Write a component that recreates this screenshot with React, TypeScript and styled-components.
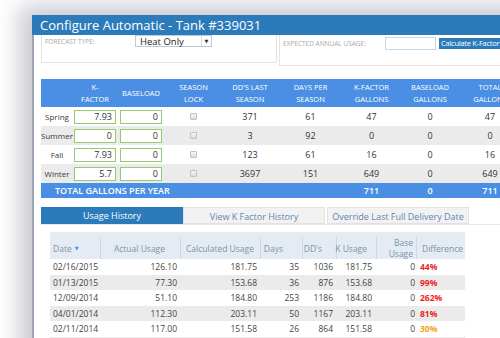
import React from "react";
import styled, { createGlobalStyle } from "styled-components";

const GlobalStyle = createGlobalStyle`
  html, body {
    margin: 0;
    padding: 0;
    background: #ffffff;
    overflow: hidden;
    font-family: "Open Sans", "DejaVu Sans", sans-serif;
  }
`;

type Season = {
  name: string;
  kFactor: string;
  baseload: string;
  dd: number;
  days: number;
  kGal: number;
  bGal: number;
  total: number;
};

const seasons: Season[] = [
  { name: "Spring", kFactor: "7.93", baseload: "0", dd: 371, days: 61, kGal: 47, bGal: 0, total: 47 },
  { name: "Summer", kFactor: "0", baseload: "0", dd: 3, days: 92, kGal: 0, bGal: 0, total: 0 },
  { name: "Fall", kFactor: "7.93", baseload: "0", dd: 123, days: 61, kGal: 16, bGal: 0, total: 16 },
  { name: "Winter", kFactor: "5.7", baseload: "0", dd: 3697, days: 151, kGal: 649, bGal: 0, total: 649 },
];

type Usage = {
  date: string;
  actual: string;
  calc: string;
  days: number;
  dd: number;
  k: string;
  base: number;
  diff: string;
  level: "high" | "mid";
};

const history: Usage[] = [
  { date: "02/16/2015", actual: "126.10", calc: "181.75", days: 35, dd: 1036, k: "181.75", base: 0, diff: "44%", level: "high" },
  { date: "01/13/2015", actual: "77.30", calc: "153.68", days: 36, dd: 876, k: "153.68", base: 0, diff: "99%", level: "high" },
  { date: "12/09/2014", actual: "51.10", calc: "184.80", days: 253, dd: 1186, k: "184.80", base: 0, diff: "262%", level: "high" },
  { date: "04/01/2014", actual: "112.30", calc: "203.11", days: 50, dd: 1167, k: "203.11", base: 0, diff: "81%", level: "high" },
  { date: "02/11/2014", actual: "117.00", calc: "151.58", days: 26, dd: 864, k: "151.58", base: 0, diff: "30%", level: "mid" },
  { date: "01/06/2014", actual: "98.40", calc: "140.22", days: 31, dd: 802, k: "140.22", base: 0, diff: "42%", level: "high" },
];

export default function App() {
  return (
    <>
      <GlobalStyle />
      <Page>
        <Dialog>
          <TitleBar>Configure Automatic - Tank #339031</TitleBar>
          <Content>
            <TopRow>
              <Panel $width={236} $height={28}>
                <FieldRow>
                  <FieldLabel $width={90}>Forecast Type:</FieldLabel>
                  <Select>
                    <span>Heat Only</span>
                    <SelectArrow>▼</SelectArrow>
                  </Select>
                </FieldRow>
              </Panel>
              <Panel $height={31} $grow>
                <FieldRow $top={2}>
                  <FieldLabel $width={102}>Expected Annual Usage:</FieldLabel>
                  <TextBox />
                  <CalcButton>Calculate K-Factors</CalcButton>
                </FieldRow>
              </Panel>
            </TopRow>

            <SeasonTable>
              <SeasonHead>
                <HeadCell />
                <HeadCell>K-<br />FACTOR</HeadCell>
                <HeadCell>BASELOAD</HeadCell>
                <HeadCell>SEASON<br />LOCK</HeadCell>
                <HeadCell>DD'S LAST<br />SEASON</HeadCell>
                <HeadCell>DAYS PER<br />SEASON</HeadCell>
                <HeadCell>K-FACTOR<br />GALLONS</HeadCell>
                <HeadCell>BASELOAD<br />GALLONS</HeadCell>
                <HeadCell>TOTAL<br />GALLONS</HeadCell>
              </SeasonHead>
              {seasons.map((s, i) => (
                <SeasonRow key={s.name} $alt={i % 2 === 1}>
                  <SeasonName>{s.name}</SeasonName>
                  <Cell><NumInput>{s.kFactor}</NumInput></Cell>
                  <Cell><NumInput>{s.baseload}</NumInput></Cell>
                  <Cell><Check /></Cell>
                  <Cell>{s.dd}</Cell>
                  <Cell>{s.days}</Cell>
                  <Cell>{s.kGal}</Cell>
                  <Cell>{s.bGal}</Cell>
                  <Cell>{s.total}</Cell>
                </SeasonRow>
              ))}
              <TotalRow>
                <TotalLabel>Total Gallons Per Year</TotalLabel>
                <TotalCell>711</TotalCell>
                <TotalCell>0</TotalCell>
                <TotalCell>711</TotalCell>
              </TotalRow>
            </SeasonTable>

            <Tabs>
              <Tab $active>Usage History</Tab>
              <Tab>View K Factor History</Tab>
              <Tab $gap>Override Last Full Delivery Date</Tab>
            </Tabs>

            <Grid>
              <GridHead>
                <GH $align="left" $pad={3}>Date <SortArrow>▼</SortArrow></GH>
                <GH $sep $pad={15}>Actual Usage</GH>
                <GH $sep $align="left" $pad={5}>Calculated Usage</GH>
                <GH $sep $pad={19}>Days</GH>
                <GH $sep $pad={14}>DD's</GH>
                <GH $sep $pad={9}>K Usage</GH>
                <GH $sep $pad={3}>Base<br />Usage</GH>
                <GH $sep $align="left" $pad={5}>Difference</GH>
              </GridHead>
              {history.map((h, i) => (
                <GridRow key={h.date} $alt={i % 2 === 1}>
                  <GC $align="left" $pad={3}>{h.date}</GC>
                  <GC $pad={3}>{h.actual}</GC>
                  <GC $pad={3}>{h.calc}</GC>
                  <GC $pad={3}>{h.days}</GC>
                  <GC $pad={3}>{h.dd}</GC>
                  <GC $pad={4}>{h.k}</GC>
                  <GC $pad={1}>{h.base}</GC>
                  <Diff $level={h.level}>{h.diff}</Diff>
                </GridRow>
              ))}
            </Grid>
          </Content>
        </Dialog>
      </Page>
    </>
  );
}

const Page = styled.div`
  padding: 15px 0 0 32px;
  height: 338px;
  box-sizing: border-box;
`;

const Dialog = styled.div`
  width: 520px;
  height: 400px;
  background: #ffffff;
  border-left: 2px solid #9ea6b6;
  box-shadow: -8px -5px 22px 4px rgba(70, 70, 100, 0.3);
`;

const TitleBar = styled.div`
  height: 20px;
  margin-left: -2px;
  padding-left: 8px;
  background: #2b7bbb;
  color: #ffffff;
  font-size: 13px;
  line-height: 20px;
  white-space: nowrap;
`;

const Content = styled.div`
  padding-left: 7px;
`;

const TopRow = styled.div`
  display: flex;
  gap: 2px;
  align-items: flex-start;
`;

const Panel = styled.div<{ $width?: number; $height: number; $grow?: boolean }>`
  box-sizing: border-box;
  width: ${(p) => (p.$width ? `${p.$width}px` : "auto")};
  flex: ${(p) => (p.$grow ? 1 : "none")};
  height: ${(p) => p.$height}px;
  border: 1px solid #e4e4e4;
  border-top: none;
  padding-left: 3px;
`;

const FieldRow = styled.div<{ $top?: number }>`
  display: flex;
  align-items: center;
  margin-top: ${(p) => p.$top ?? 0}px;
  height: 12px;
`;

const FieldLabel = styled.div<{ $width: number }>`
  width: ${(p) => p.$width}px;
  font-size: 6.5px;
  color: #a8a8a8;
  text-transform: uppercase;
  white-space: nowrap;
`;

const Select = styled.div`
  box-sizing: border-box;
  width: 77px;
  height: 12px;
  border: 1px solid #bccadb;
  display: flex;
  align-items: center;
  justify-content: space-between;
  padding-left: 4px;
  font-size: 9.5px;
  color: #222;
  background: #fff;
`;

const SelectArrow = styled.span`
  width: 9px;
  height: 100%;
  border-left: 1px solid #d4dbe4;
  font-size: 5px;
  display: flex;
  align-items: center;
  justify-content: center;
  color: #333;
`;

const TextBox = styled.div`
  box-sizing: border-box;
  width: 51px;
  height: 13px;
  border: 1px solid #c4d6ea;
  background: #fff;
`;

const CalcButton = styled.div`
  margin-left: 3px;
  height: 11px;
  padding: 0 2px;
  background: #2b7bbb;
  color: #fff;
  font-size: 7.5px;
  letter-spacing: -0.25px;
  line-height: 11px;
  white-space: nowrap;
`;

const cols = "32px 44px 48px 57px 56px 65px 57px 60px 60px";

const SeasonTable = styled.div`
  margin-top: 13px;
  width: 479px;
`;

const SeasonHead = styled.div`
  display: grid;
  grid-template-columns: ${cols};
  height: 28px;
  background: #4a8fe3;
`;

const HeadCell = styled.div`
  display: flex;
  align-items: center;
  justify-content: center;
  text-align: center;
  color: #ffffff;
  font-size: 7.5px;
  line-height: 12px;
`;

const SeasonRow = styled.div<{ $alt?: boolean }>`
  display: grid;
  grid-template-columns: ${cols};
  height: 19px;
  background: ${(p) => (p.$alt ? "#ebebeb" : "#ffffff")};
`;

const Cell = styled.div`
  display: flex;
  align-items: center;
  justify-content: center;
  font-size: 9px;
  color: #333;
`;

const SeasonName = styled(Cell)`
  font-size: 8px;
  color: #3a3a3a;
`;

const NumInput = styled.div`
  box-sizing: border-box;
  width: 42px;
  height: 14px;
  border: 1px solid #95cc6f;
  background: #ffffff;
  text-align: right;
  padding-right: 3px;
  font-size: 9px;
  line-height: 12px;
  color: #333;
`;

const Check = styled.span`
  box-sizing: border-box;
  width: 7px;
  height: 7px;
  border: 1px solid #c2c2c2;
  border-radius: 1px;
  background: linear-gradient(#f6f6f6, #dcdcdc);
`;

const TotalRow = styled.div`
  display: grid;
  grid-template-columns: 302px 57px 60px 60px;
  height: 15px;
  background: #4a8fe3;
  color: #fff;
`;

const TotalLabel = styled.div`
  padding-left: 14px;
  font-size: 9px;
  font-weight: 600;
  text-transform: uppercase;
  line-height: 15px;
  white-space: nowrap;
`;

const TotalCell = styled.div`
  text-align: center;
  font-size: 9px;
  font-weight: 600;
  line-height: 15px;
`;

const Tabs = styled.div`
  display: flex;
  margin-top: 9px;
  height: 17px;
  border-bottom: 1px solid #e8e8e8;
`;

const Tab = styled.div<{ $active?: boolean; $gap?: boolean }>`
  box-sizing: border-box;
  width: 142px;
  margin-left: ${(p) => (p.$gap ? 2 : 0)}px;
  background: ${(p) => (p.$active ? "#2b7bbb" : "#f2f2f2")};
  border: ${(p) => (p.$active ? "none" : "1px solid #e2e2e2")};
  color: ${(p) => (p.$active ? "#ffffff" : "#5a86b4")};
  font-size: 9px;
  line-height: 17px;
  text-align: center;
  white-space: nowrap;
`;

const gridCols = "50px 80px 80px 42px 34px 40px 40px 49px";

const Grid = styled.div`
  margin: 7px 0 0 9px;
  width: 415px;
`;

const GridHead = styled.div`
  display: grid;
  grid-template-columns: ${gridCols};
  height: 27px;
  background: #e5ebf2;
`;

const GH = styled.div<{ $align?: "left" | "right"; $pad: number; $sep?: boolean }>`
  display: flex;
  align-items: center;
  justify-content: ${(p) => (p.$align === "left" ? "flex-start" : "flex-end")};
  text-align: ${(p) => p.$align ?? "right"};
  ${(p) => (p.$align === "left" ? "padding-left" : "padding-right")}: ${(p) => p.$pad}px;
  margin: 5px 0;
  border-left: ${(p) => (p.$sep ? "1px solid #cfd8e3" : "none")};
  font-size: 8.5px;
  line-height: 11px;
  color: #7d93aa;
  white-space: nowrap;
`;

const SortArrow = styled.span`
  font-size: 5px;
  margin-left: 3px;
  color: #4a8fe3;
`;

const GridRow = styled.div<{ $alt?: boolean }>`
  display: grid;
  grid-template-columns: ${gridCols};
  height: 15.5px;
  background: ${(p) => (p.$alt ? "#ebebeb" : "#ffffff")};
`;

const GC = styled.div<{ $align?: "left" | "right"; $pad: number }>`
  text-align: ${(p) => p.$align ?? "right"};
  ${(p) => (p.$align === "left" ? "padding-left" : "padding-right")}: ${(p) => p.$pad}px;
  font-size: 8.5px;
  line-height: 15.5px;
  color: #444;
  white-space: nowrap;
`;

const Diff = styled.div<{ $level: "high" | "mid" }>`
  padding-left: 4px;
  font-size: 8.5px;
  font-weight: 700;
  line-height: 15.5px;
  color: ${(p) => (p.$level === "high" ? "#ee1c25" : "#f5a21b")};
`;
